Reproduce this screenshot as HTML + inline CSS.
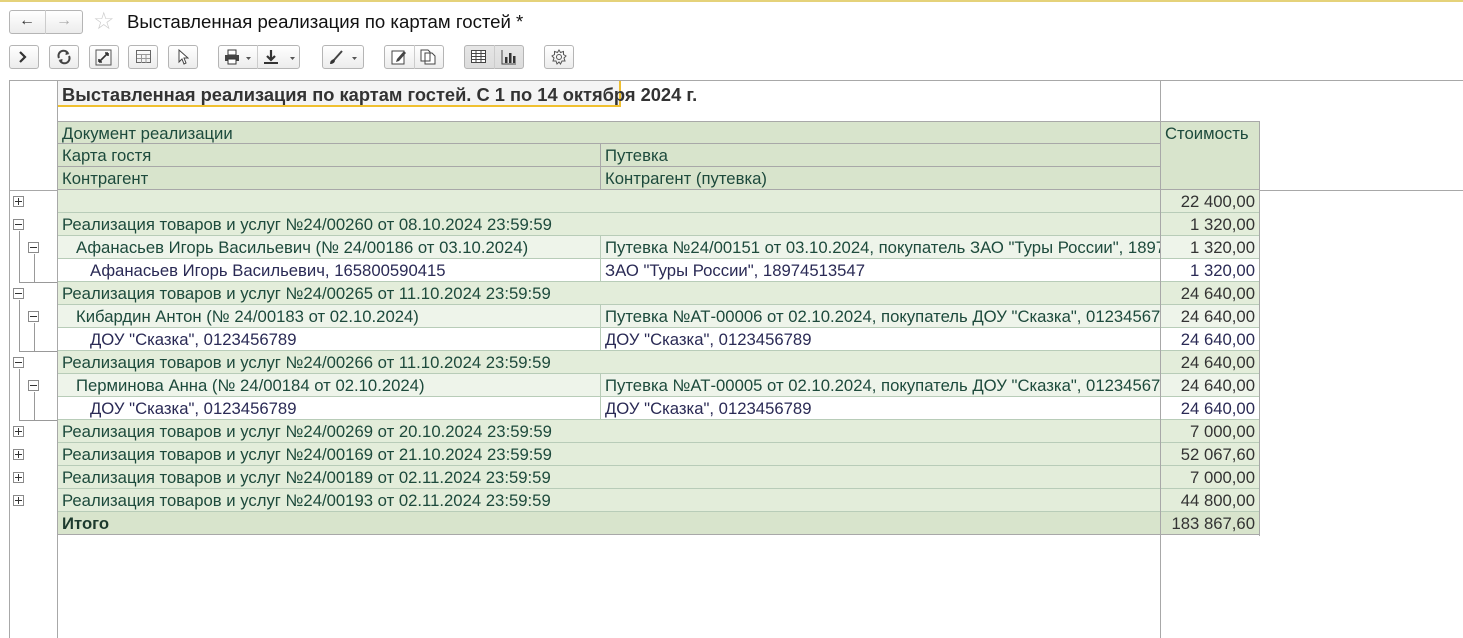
<!DOCTYPE html>
<html><head><meta charset="utf-8"><style>
*{margin:0;padding:0;box-sizing:border-box}
body{width:1463px;height:638px;background:#fff;position:relative;overflow:hidden;font-family:"Liberation Sans",Arial,sans-serif}
.a{position:absolute}
.btn{position:absolute;top:45px;height:24px;border:1px solid #b5b5b5;border-radius:3px;background:linear-gradient(#fff,#ececec)}
.c{position:absolute;height:23px;font-size:16.7px;line-height:24px;padding-left:4px;white-space:nowrap;overflow:hidden;color:#1d4a3c;border-bottom:1px solid #b8ccb8}
.n{text-align:right;padding-right:4px;color:#333}
.h{background:#d8e4cc;border-bottom:1px solid #a8a8a8}
.l1{background:#e3edda}
.l2{background:#eef4ea}
.l3{background:#fff;color:#2a2a55}
.bx{position:absolute;width:11px;height:11px;border:1px solid #8a8a8a;background:#fff}
.bx:before{content:"";position:absolute;left:1px;top:4px;width:7px;height:1px;background:#333}
.p:after{content:"";position:absolute;left:4px;top:1px;width:1px;height:7px;background:#333}
.vl{position:absolute;width:1px;background:#999}
.hl{position:absolute;height:1px;background:#999}
</style></head><body>
<div class="a" style="left:0;top:0;width:1463px;height:2px;background:#e5d27a"></div>
<div class="btn" style="top:10px;left:9px;width:74px;height:24px"></div>
<div class="a" style="left:45px;top:10px;width:1px;height:24px;background:#ccc"></div>
<div class="a" style="left:19px;top:12px;font-size:16px;color:#333">&#8592;</div>
<div class="a" style="left:56px;top:12px;font-size:16px;color:#aaa">&#8594;</div>
<div class="a" style="left:93px;top:7px;font-size:24px;color:#ccc">&#9734;</div>
<div class="a" style="left:127px;top:11px;font-size:18.6px;color:#111;white-space:nowrap">Выставленная реализация по картам гостей *</div>
<div class="btn" style="left:9px;width:30px"></div>
<svg class="a" style="left:18px;top:51px" width="10" height="12"><path d="M2 1L7 6L2 11" stroke="#333" stroke-width="2.2" fill="none"/></svg>
<div class="btn" style="left:49px;width:30px"></div>
<svg class="a" style="left:56px;top:49px" width="16" height="16"><path d="M3 9A5 5 0 0 1 12 4.5M13 7A5 5 0 0 1 4 11.5" stroke="#444" stroke-width="2" fill="none"/><path d="M10 2L13.5 5L9.5 6Z M6 14L2.5 11L6.5 10Z" fill="#444"/></svg>
<div class="btn" style="left:89px;width:30px"></div>
<svg class="a" style="left:95px;top:49px" width="18" height="17"><rect x="1" y="1" width="15" height="15" fill="none" stroke="#555"/><path d="M4 13L9 8M4 13V10M4 13H7M13 4L9 8M13 4V7M13 4H10" stroke="#333" stroke-width="1.6" fill="none"/></svg>
<div class="btn" style="left:128px;width:30px"></div>
<svg class="a" style="left:136px;top:50px" width="16" height="14"><rect x=".5" y=".5" width="14" height="12" fill="none" stroke="#666"/><path d="M1 4.5H14M1 8.5H14M5.5 4V13M10 4V13" stroke="#999"/></svg>
<div class="btn" style="left:168px;width:30px"></div>
<svg class="a" style="left:177px;top:49px" width="12" height="16"><path d="M2 1V13L5 10L7 15L9 14L7 9H11Z" fill="#fff" stroke="#444"/></svg>
<div class="btn" style="left:218px;width:82px"></div><div class="a" style="left:257px;top:45px;width:1px;height:24px;background:#ccc"></div>
<svg class="a" style="left:224px;top:49px" width="30" height="16"><rect x="4" y="1" width="8" height="5" fill="#fff" stroke="#333"/><rect x="1" y="6" width="14" height="6" fill="#444"/><rect x="4" y="10" width="8" height="5" fill="#fff" stroke="#333"/><path d="M22 8h5l-2.5 3z" fill="#555"/></svg>
<svg class="a" style="left:263px;top:49px" width="34" height="16"><path d="M8 1V11M4 7L8 11L12 7" stroke="#333" stroke-width="2.2" fill="none"/><rect x="1" y="13" width="14" height="2" fill="#333"/><path d="M27 8h5l-2.5 3z" fill="#555"/></svg>
<div class="btn" style="left:322px;width:42px"></div>
<svg class="a" style="left:328px;top:49px" width="32" height="16"><path d="M14 2L6 11" stroke="#444" stroke-width="2"/><path d="M6 10Q2 11 2 15Q6 15 7 12Z" fill="#333"/><path d="M24 8h5l-2.5 3z" fill="#555"/></svg>
<div class="btn" style="left:384px;width:60px"></div><div class="a" style="left:414px;top:45px;width:1px;height:24px;background:#ccc"></div>
<svg class="a" style="left:391px;top:49px" width="16" height="16"><rect x="1" y="2" width="12" height="13" fill="#fff" stroke="#444"/><path d="M13 2L6 10L5 13L8 12L15 4Z" fill="#444"/></svg>
<svg class="a" style="left:420px;top:49px" width="18" height="16"><path d="M1 1H8L10 3V12H1Z M5 4H12L15 7V15H5Z" fill="#fff" stroke="#444"/></svg>
<div class="btn" style="left:464px;width:60px;background:linear-gradient(#e6e6e6,#dcdcdc)"></div><div class="a" style="left:494px;top:45px;width:1px;height:24px;background:#ccc"></div>
<svg class="a" style="left:471px;top:50px" width="16" height="14"><rect x=".5" y=".5" width="14" height="12" fill="#fff" stroke="#444"/><path d="M1 3.5H14M1 6.5H14M1 9.5H14M5 1V13M10 1V13" stroke="#444"/></svg>
<svg class="a" style="left:501px;top:49px" width="16" height="16"><path d="M1 1V15H15" stroke="#444" fill="none"/><rect x="4" y="8" width="2.5" height="6" fill="#333"/><rect x="8" y="4" width="2.5" height="10" fill="#333"/><rect x="12" y="7" width="2.5" height="7" fill="#333"/></svg>
<div class="btn" style="left:544px;width:30px"></div>
<svg class="a" style="left:550px;top:48px" width="18" height="18"><circle cx="9" cy="9" r="2.5" fill="none" stroke="#555"/><path d="M9 2L10.5 4.5L13.5 3.5L13.5 6.5L16 8L14 10L15 13L12 13L10.5 16L9 14L7 16L6 13L3 13L4 10L2 8L4.5 6.5L4.5 3.5L7.5 4.5Z" fill="none" stroke="#555"/></svg>
<div class="hl" style="left:9px;top:80px;width:1454px;background:#a8a8a8"></div>
<div class="vl" style="left:9px;top:80px;height:558px;background:#a8a8a8"></div>
<div class="vl" style="left:57px;top:80px;height:558px;background:#a8a8a8"></div>
<div class="vl" style="left:1160px;top:80px;height:558px;background:#a8a8a8"></div>
<div class="hl" style="left:9px;top:190px;width:1454px;background:#a8a8a8"></div>
<div class="a" style="left:58px;top:81px;width:563px;height:26px;background:#f4f4f4;border-right:2px solid #f0c030;border-bottom:2px solid #f0c030"></div>
<div class="a" style="left:62px;top:84px;font-size:18.3px;font-weight:bold;color:#333;white-space:nowrap">Выставленная реализация по картам гостей. С 1 по 14 октября 2024 г.</div>
<div class="c h" style="left:58px;top:121px;width:1102px;border-top:1px solid #a8a8a8">Документ реализации</div>
<div class="c h" style="left:58px;top:144px;width:542px">Карта гостя</div>
<div class="c h" style="left:600px;top:144px;width:560px;border-left:1px solid #a8a8a8">Путевка</div>
<div class="c h" style="left:58px;top:167px;width:542px">Контрагент</div>
<div class="c h" style="left:600px;top:167px;width:560px;border-left:1px solid #a8a8a8">Контрагент (путевка)</div>
<div class="c h" style="left:1161px;top:121px;width:99px;height:69px;border-top:1px solid #a8a8a8;border-right:1px solid #a8a8a8;padding-left:4px;line-height:24px">Стоимость</div>
<div class="c l1" style="left:58px;top:190px;width:1102px"></div><div class="c l1 n" style="left:1161px;top:190px;width:98px">22 400,00</div>
<div class="c l1" style="left:58px;top:213px;width:1102px">Реализация товаров и услуг №24/00260 от 08.10.2024 23:59:59</div><div class="c l1 n" style="left:1161px;top:213px;width:98px">1 320,00</div>
<div class="c l2" style="left:58px;top:236px;width:542px;padding-left:18px">Афанасьев Игорь Васильевич (№ 24/00186 от 03.10.2024)</div><div class="c l2" style="left:600px;top:236px;width:560px;border-left:1px solid #b8ccb8">Путевка №24/00151 от 03.10.2024, покупатель ЗАО "Туры России", 18974513547</div><div class="c l2 n" style="left:1161px;top:236px;width:98px">1 320,00</div>
<div class="c l3" style="left:58px;top:259px;width:542px;padding-left:32px">Афанасьев Игорь Васильевич, 165800590415</div><div class="c l3" style="left:600px;top:259px;width:560px;border-left:1px solid #b8ccb8">ЗАО "Туры России", 18974513547</div><div class="c l3 n" style="left:1161px;top:259px;width:98px">1 320,00</div>
<div class="c l1" style="left:58px;top:282px;width:1102px">Реализация товаров и услуг №24/00265 от 11.10.2024 23:59:59</div><div class="c l1 n" style="left:1161px;top:282px;width:98px">24 640,00</div>
<div class="c l2" style="left:58px;top:305px;width:542px;padding-left:18px">Кибардин Антон (№ 24/00183 от 02.10.2024)</div><div class="c l2" style="left:600px;top:305px;width:560px;border-left:1px solid #b8ccb8">Путевка №АТ-00006 от 02.10.2024, покупатель ДОУ "Сказка", 0123456789</div><div class="c l2 n" style="left:1161px;top:305px;width:98px">24 640,00</div>
<div class="c l3" style="left:58px;top:328px;width:542px;padding-left:32px">ДОУ "Сказка", 0123456789</div><div class="c l3" style="left:600px;top:328px;width:560px;border-left:1px solid #b8ccb8">ДОУ "Сказка", 0123456789</div><div class="c l3 n" style="left:1161px;top:328px;width:98px">24 640,00</div>
<div class="c l1" style="left:58px;top:351px;width:1102px">Реализация товаров и услуг №24/00266 от 11.10.2024 23:59:59</div><div class="c l1 n" style="left:1161px;top:351px;width:98px">24 640,00</div>
<div class="c l2" style="left:58px;top:374px;width:542px;padding-left:18px">Перминова Анна (№ 24/00184 от 02.10.2024)</div><div class="c l2" style="left:600px;top:374px;width:560px;border-left:1px solid #b8ccb8">Путевка №АТ-00005 от 02.10.2024, покупатель ДОУ "Сказка", 0123456789</div><div class="c l2 n" style="left:1161px;top:374px;width:98px">24 640,00</div>
<div class="c l3" style="left:58px;top:397px;width:542px;padding-left:32px">ДОУ "Сказка", 0123456789</div><div class="c l3" style="left:600px;top:397px;width:560px;border-left:1px solid #b8ccb8">ДОУ "Сказка", 0123456789</div><div class="c l3 n" style="left:1161px;top:397px;width:98px">24 640,00</div>
<div class="c l1" style="left:58px;top:420px;width:1102px">Реализация товаров и услуг №24/00269 от 20.10.2024 23:59:59</div><div class="c l1 n" style="left:1161px;top:420px;width:98px">7 000,00</div>
<div class="c l1" style="left:58px;top:443px;width:1102px">Реализация товаров и услуг №24/00169 от 21.10.2024 23:59:59</div><div class="c l1 n" style="left:1161px;top:443px;width:98px">52 067,60</div>
<div class="c l1" style="left:58px;top:466px;width:1102px">Реализация товаров и услуг №24/00189 от 02.11.2024 23:59:59</div><div class="c l1 n" style="left:1161px;top:466px;width:98px">7 000,00</div>
<div class="c l1" style="left:58px;top:489px;width:1102px">Реализация товаров и услуг №24/00193 от 02.11.2024 23:59:59</div><div class="c l1 n" style="left:1161px;top:489px;width:98px">44 800,00</div>
<div class="c h" style="left:58px;top:512px;width:1102px;font-weight:bold;color:#1d3a2e">Итого</div><div class="c h n" style="left:1161px;top:512px;width:98px">183 867,60</div>
<div class="vl" style="left:1259px;top:190px;height:346px;background:#a8a8a8"></div>
<div class="bx p" style="left:13px;top:196px"></div>
<div class="bx" style="left:13px;top:219px"></div>
<div class="vl" style="left:19px;top:231px;height:51px"></div><div class="hl" style="left:19px;top:282px;width:38px"></div>
<div class="bx" style="left:28px;top:242px"></div><div class="vl" style="left:34px;top:254px;height:28px"></div>
<div class="bx" style="left:13px;top:288px"></div>
<div class="vl" style="left:19px;top:300px;height:51px"></div><div class="hl" style="left:19px;top:351px;width:38px"></div>
<div class="bx" style="left:28px;top:311px"></div><div class="vl" style="left:34px;top:323px;height:28px"></div>
<div class="bx" style="left:13px;top:357px"></div>
<div class="vl" style="left:19px;top:369px;height:51px"></div><div class="hl" style="left:19px;top:420px;width:38px"></div>
<div class="bx" style="left:28px;top:380px"></div><div class="vl" style="left:34px;top:392px;height:28px"></div>
<div class="bx p" style="left:13px;top:426px"></div>
<div class="bx p" style="left:13px;top:449px"></div>
<div class="bx p" style="left:13px;top:472px"></div>
<div class="bx p" style="left:13px;top:495px"></div>
</body></html>
